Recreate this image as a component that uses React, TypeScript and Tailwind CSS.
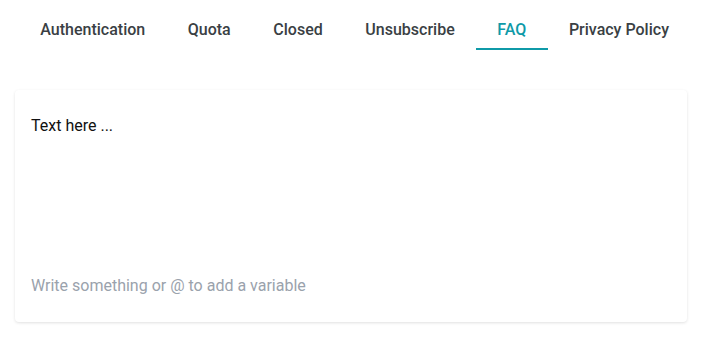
const tabs = ["Authentication", "Quota", "Closed", "Unsubscribe", "FAQ", "Privacy Policy"];

export default function App() {
  const active = "FAQ";
  return (
    <div className="h-[345px] w-[705px] bg-white" style={{ fontFamily: "Roboto, 'Liberation Sans', sans-serif" }}>
      <div className="flex pl-[19px] pt-[10px]">
        {tabs.map((t) => (
          <div
            key={t}
            className={
              "flex h-[40px] items-center border-b-2 px-[21.3px] pt-[1px] text-[16px] font-medium " +
              (t === active ? "border-[#0f9aa8] text-[#0f9aa8]" : "border-transparent text-[#3a3f44]")
            }
          >
            {t}
          </div>
        ))}
      </div>
      <div className="ml-[15px] mt-[40px] flex h-[232px] w-[672px] flex-col justify-between rounded-[4px] bg-white px-4 pb-[26px] pt-[26px] shadow-[0_1px_3px_rgba(0,0,0,0.12)]">
        <div className="text-[16px] leading-5 text-[#111]">Text here ...</div>
        <div className="text-[16px] leading-5 text-[#9aa2ac]">Write something or @ to add a variable</div>
      </div>
    </div>
  );
}
